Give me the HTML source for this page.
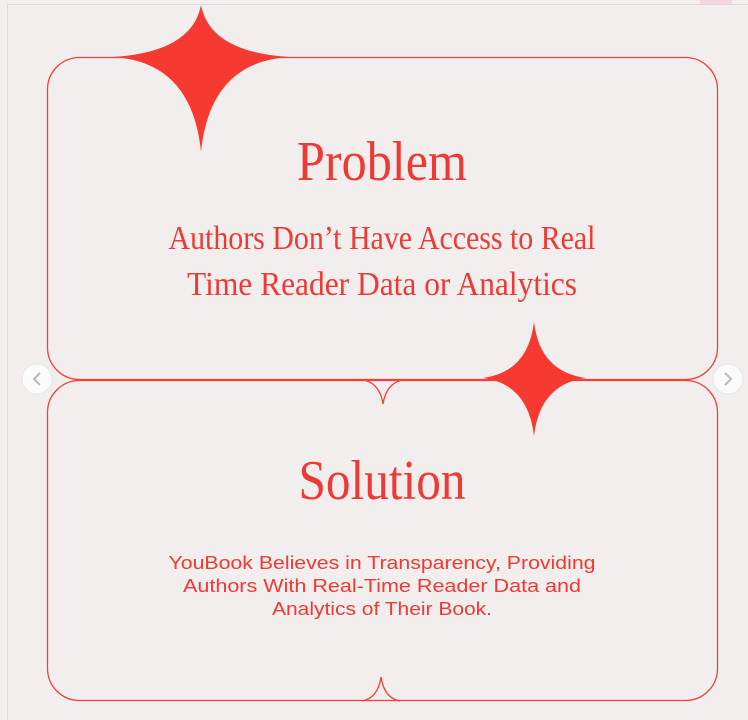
<!DOCTYPE html>
<html><head><meta charset="utf-8"><style>
html,body{margin:0;padding:0;background:#f3eeee;width:748px;height:720px;overflow:hidden}
</style></head><body>
<svg width="748" height="720" viewBox="0 0 748 720" xmlns="http://www.w3.org/2000/svg">
<rect x="0" y="0" width="748" height="720" fill="#f3eeee"/>
<line x1="7.5" y1="4" x2="7.5" y2="720" stroke="#dcdcdc"/>
<line x1="7" y1="4.5" x2="748" y2="4.5" stroke="#dcdcdc"/>
<rect x="700" y="0" width="32" height="4" fill="#f2d6e0"/>
<g fill="none" stroke="#f0423a" stroke-width="1.3">
<rect x="47.5" y="57.5" width="670" height="322" rx="32"/>
<rect x="47.5" y="380.5" width="670" height="320" rx="32"/>
<path d="M364 380 Q380 384 383 404 Q386 384 402 380"/>
<path d="M362 701 Q378 698 381 677 Q384 698 400 701"/>
</g>
<g fill="#f63a32">
<path d="M201 5 Q210 52 289 57 Q210 62 201 152 Q192 62 113 57 Q192 52 201 5Z"/>
<path d="M534 322 Q540 372 586 378 Q540 384 534 436 Q528 384 483 378 Q528 372 534 322Z"/>
</g>
<g font-family="Liberation Serif, serif" fill="#ee3a34" text-anchor="middle">
<text x="382" y="180" font-size="56" textLength="170" lengthAdjust="spacingAndGlyphs">Problem</text>
<text x="382" y="249" font-size="34" textLength="427" lengthAdjust="spacingAndGlyphs">Authors Don’t Have Access to Real</text>
<text x="382" y="295" font-size="34" textLength="390" lengthAdjust="spacingAndGlyphs">Time Reader Data or Analytics</text>
<text x="382" y="499" font-size="56" textLength="167" lengthAdjust="spacingAndGlyphs">Solution</text>
</g>
<g font-family="Liberation Sans, sans-serif" fill="#ee3a34" text-anchor="middle" font-size="18">
<text x="382" y="569" textLength="427" lengthAdjust="spacingAndGlyphs">YouBook Believes in Transparency, Providing</text>
<text x="382" y="592" textLength="398" lengthAdjust="spacingAndGlyphs">Authors With Real-Time Reader Data and</text>
<text x="382" y="615" textLength="220" lengthAdjust="spacingAndGlyphs">Analytics of Their Book.</text>
</g>
<g>
<circle cx="37" cy="379" r="15" fill="#fbfbfb" stroke="#e6e6e6"/>
<path d="M40 373 L34 379 L40 385" fill="none" stroke="#b8b8b8" stroke-width="2"/>
<circle cx="728" cy="379" r="15" fill="#fbfbfb" stroke="#e6e6e6"/>
<path d="M725 373 L731 379 L725 385" fill="none" stroke="#b8b8b8" stroke-width="2"/>
</g>
</svg>
</body></html>
